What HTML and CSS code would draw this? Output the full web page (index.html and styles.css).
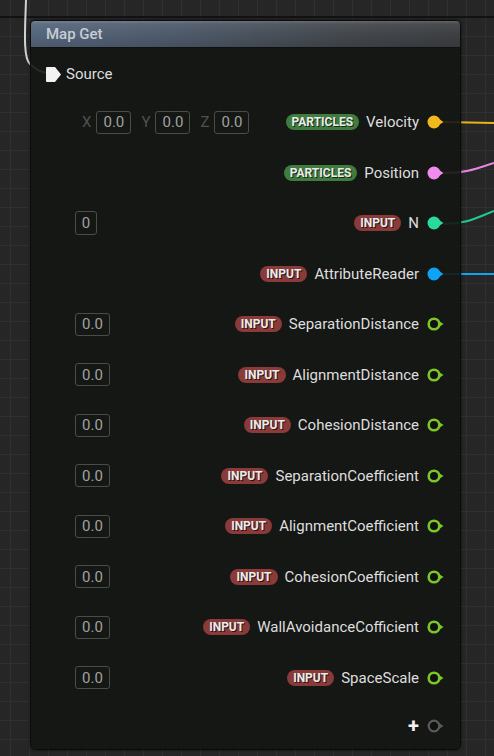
FILE: index.html
```html
<!DOCTYPE html>
<html>
<head>
    <meta charset="UTF-8">
    <title>Map Get</title>
    <link rel="stylesheet" href="styles.css">
</head>
<body>
    <div class="graph">
        <svg class="wires" viewBox="0 0 494 756">
            <path class="wire" stroke="#d2d2d2" d="M26 0 C 25 30, 23 58, 30 64 S 40 72, 48 73"/>
            <path class="wire" stroke="#e9b21d" d="M444 122 L 494 123"/>
            <path class="wire" stroke="#e585e0" d="M444 173 C 468 173, 478 168, 494 163"/>
            <path class="wire" stroke="#22c893" d="M444 224 C 466 224, 476 218, 494 211"/>
            <path class="wire" stroke="#12a2f0" d="M444 274 L 494 274"/>
        </svg>

        <div class="node">
            <div class="node-header">Map Get</div>
            <div class="node-body">
                <div class="row row-source">
                    <svg class="exec-pin" viewBox="0 0 15 15"><path d="M1 0 H9 L15 7.5 L9 15 H1 Q0 15 0 14 V1 Q0 0 1 0 Z"/></svg>
                    <span class="pin-label">Source</span>
                </div>

                <div class="row">
                    <div class="defaults vector">
                        <span class="axis">X</span><span class="value">0.0</span>
                        <span class="axis">Y</span><span class="value">0.0</span>
                        <span class="axis">Z</span><span class="value">0.0</span>
                    </div>
                    <div class="output">
                        <span class="tag tag-particles">PARTICLES</span>
                        <span class="pin-label">Velocity</span>
                        <svg class="pin" viewBox="0 0 17 14"><circle cx="7" cy="7" r="6.5" fill="#f2b91d"/><path d="M12 4 L16.5 7 L12 10 Z" fill="#f2b91d"/></svg>
                    </div>
                </div>

                <div class="row">
                    <div class="defaults"></div>
                    <div class="output">
                        <span class="tag tag-particles">PARTICLES</span>
                        <span class="pin-label">Position</span>
                        <svg class="pin" viewBox="0 0 17 14"><circle cx="7" cy="7" r="6.5" fill="#f08cec"/><path d="M12 4 L16.5 7 L12 10 Z" fill="#f08cec"/></svg>
                    </div>
                </div>

                <div class="row">
                    <div class="defaults"><span class="value value-int">0</span></div>
                    <div class="output">
                        <span class="tag tag-input">INPUT</span>
                        <span class="pin-label">N</span>
                        <svg class="pin" viewBox="0 0 17 14"><circle cx="7" cy="7" r="6.5" fill="#2ad99c"/><path d="M12 4 L16.5 7 L12 10 Z" fill="#2ad99c"/></svg>
                    </div>
                </div>

                <div class="row">
                    <div class="defaults"></div>
                    <div class="output">
                        <span class="tag tag-input">INPUT</span>
                        <span class="pin-label">AttributeReader</span>
                        <svg class="pin" viewBox="0 0 17 14"><circle cx="7" cy="7" r="6.5" fill="#0ea3f5"/><path d="M12 4 L16.5 7 L12 10 Z" fill="#0ea3f5"/></svg>
                    </div>
                </div>

                <div class="row">
                    <div class="defaults"><span class="value">0.0</span></div>
                    <div class="output">
                        <span class="tag tag-input">INPUT</span>
                        <span class="pin-label">SeparationDistance</span>
                        <svg class="pin pin-float" viewBox="0 0 17 14"><circle cx="7" cy="7" r="5.3"/><path d="M12 4 L16.5 7 L12 10 Z"/></svg>
                    </div>
                </div>

                <div class="row">
                    <div class="defaults"><span class="value">0.0</span></div>
                    <div class="output">
                        <span class="tag tag-input">INPUT</span>
                        <span class="pin-label">AlignmentDistance</span>
                        <svg class="pin pin-float" viewBox="0 0 17 14"><circle cx="7" cy="7" r="5.3"/><path d="M12 4 L16.5 7 L12 10 Z"/></svg>
                    </div>
                </div>

                <div class="row">
                    <div class="defaults"><span class="value">0.0</span></div>
                    <div class="output">
                        <span class="tag tag-input">INPUT</span>
                        <span class="pin-label">CohesionDistance</span>
                        <svg class="pin pin-float" viewBox="0 0 17 14"><circle cx="7" cy="7" r="5.3"/><path d="M12 4 L16.5 7 L12 10 Z"/></svg>
                    </div>
                </div>

                <div class="row">
                    <div class="defaults"><span class="value">0.0</span></div>
                    <div class="output">
                        <span class="tag tag-input">INPUT</span>
                        <span class="pin-label">SeparationCoefficient</span>
                        <svg class="pin pin-float" viewBox="0 0 17 14"><circle cx="7" cy="7" r="5.3"/><path d="M12 4 L16.5 7 L12 10 Z"/></svg>
                    </div>
                </div>

                <div class="row">
                    <div class="defaults"><span class="value">0.0</span></div>
                    <div class="output">
                        <span class="tag tag-input">INPUT</span>
                        <span class="pin-label">AlignmentCoefficient</span>
                        <svg class="pin pin-float" viewBox="0 0 17 14"><circle cx="7" cy="7" r="5.3"/><path d="M12 4 L16.5 7 L12 10 Z"/></svg>
                    </div>
                </div>

                <div class="row">
                    <div class="defaults"><span class="value">0.0</span></div>
                    <div class="output">
                        <span class="tag tag-input">INPUT</span>
                        <span class="pin-label">CohesionCoefficient</span>
                        <svg class="pin pin-float" viewBox="0 0 17 14"><circle cx="7" cy="7" r="5.3"/><path d="M12 4 L16.5 7 L12 10 Z"/></svg>
                    </div>
                </div>

                <div class="row">
                    <div class="defaults"><span class="value">0.0</span></div>
                    <div class="output">
                        <span class="tag tag-input">INPUT</span>
                        <span class="pin-label">WallAvoidanceCofficient</span>
                        <svg class="pin pin-float" viewBox="0 0 17 14"><circle cx="7" cy="7" r="5.3"/><path d="M12 4 L16.5 7 L12 10 Z"/></svg>
                    </div>
                </div>

                <div class="row">
                    <div class="defaults"><span class="value">0.0</span></div>
                    <div class="output">
                        <span class="tag tag-input">INPUT</span>
                        <span class="pin-label">SpaceScale</span>
                        <svg class="pin pin-float" viewBox="0 0 17 14"><circle cx="7" cy="7" r="5.3"/><path d="M12 4 L16.5 7 L12 10 Z"/></svg>
                    </div>
                </div>

                <div class="row row-add">
                    <div class="defaults"></div>
                    <div class="output">
                        <span class="add">+</span>
                        <svg class="pin pin-empty" viewBox="0 0 17 14"><circle cx="7" cy="7" r="5.3"/><path d="M12 4 L16.5 7 L12 10 Z"/></svg>
                    </div>
                </div>
            </div>
        </div>
    </div>
</body>
</html>
```

FILE: styles.css
```css
body {
    margin: 0;
    width: 494px;
    height: 756px;
    overflow: hidden;
    font-family: Roboto, "Liberation Sans", sans-serif;
    background-color: #262626;
}

.graph {
    position: relative;
    height: 100%;
    padding: 20px 0 0 30px;
    box-sizing: border-box;
    background-color: #262626;
    background-image:
        linear-gradient(#121212, #121212),
        repeating-linear-gradient(to bottom, transparent 0 17px, #303030 17px 18px, transparent 18px 19px),
        repeating-linear-gradient(to right, transparent 0 10px, #303030 10px 11px, transparent 11px 19px);
    background-size: 100% 2px, 100% 100%, 100% 100%;
    background-position: 0 16px, 0 0, 0 0;
    background-repeat: no-repeat, repeat, repeat;
}

.wires {
    position: absolute;
    left: 0;
    top: 0;
    width: 494px;
    height: 756px;
}

.wire {
    fill: none;
    stroke-width: 2;
}

.node {
    position: relative;
    width: 431px;
    height: 730px;
    display: flex;
    flex-direction: column;
    border-radius: 5px;
    border: 1px solid #0b0b0b;
    box-sizing: border-box;
    overflow: hidden;
    box-shadow: 0 0 3px rgba(0,0,0,0.6);
}

.node-header {
    height: 26px;
    flex-shrink: 0;
    padding-left: 15px;
    display: flex;
    align-items: center;
    font-size: 15px;
    font-weight: 500;
    color: #c6cdd5;
    background:
        linear-gradient(to bottom, rgba(255,255,255,0.18) 0, rgba(255,255,255,0.06) 3px, rgba(0,0,0,0) 50%, rgba(0,0,0,0.12) 100%),
        linear-gradient(to right, #56667c 0%, #4e5a6a 35%, #44494f 70%, #3d3f42 100%);
    border-bottom: 1px solid #101010;
}

.node-body {
    flex: 1;
    background-color: rgba(20, 22, 20, 0.9);
}

.row {
    height: 50.5px;
    display: flex;
    align-items: center;
    justify-content: space-between;
    padding: 0 16px 0 44px;
}

.row-source {
    height: 30px;
    margin: 11px 0 8px;
    justify-content: flex-start;
    padding-left: 15px;
    gap: 5px;
}

.row-add {
    height: 46px;
}

.exec-pin {
    width: 15px;
    height: 15px;
    fill: #f2f2f2;
}

.defaults {
    display: flex;
    align-items: center;
}

.vector {
    margin-left: 7px;
}

.axis {
    font-size: 15px;
    color: #4f524f;
    margin-right: 5px;
}

.value {
    height: 23px;
    width: 35px;
    box-sizing: border-box;
    display: flex;
    align-items: center;
    justify-content: center;
    font-size: 15px;
    color: #a0a2a0;
    border: 1.5px solid #4a4c4a;
    border-radius: 3px;
    margin-right: 10px;
}

.value-int {
    width: 22px;
    height: 24px;
}

.output {
    display: flex;
    align-items: center;
}

.tag {
    height: 16px;
    padding: 0 6px;
    border-radius: 8px;
    display: flex;
    align-items: center;
    font-size: 12px;
    font-weight: 700;
    color: #e9ece9;
    text-shadow: 1px 1px 0 rgba(0,0,0,0.7);
    margin-right: 7px;
}

.tag-particles {
    background-color: #3f7c3d;
}

.tag-input {
    background-color: #8a3a39;
}

.pin-label {
    font-size: 15px;
    color: #dedede;
}

.pin {
    width: 17px;
    height: 14px;
    margin-left: 8px;
}

.pin-float circle {
    fill: #101210;
    stroke: #7cc728;
    stroke-width: 2.6;
}

.pin-float path {
    fill: #7cc728;
}

.pin-empty circle {
    fill: #101210;
    stroke: #5a5a5a;
    stroke-width: 2.2;
}

.pin-empty path {
    fill: #5a5a5a;
}

.add {
    font-size: 20px;
    font-weight: 700;
    color: #f2f2f2;
    line-height: 1;
}
```
